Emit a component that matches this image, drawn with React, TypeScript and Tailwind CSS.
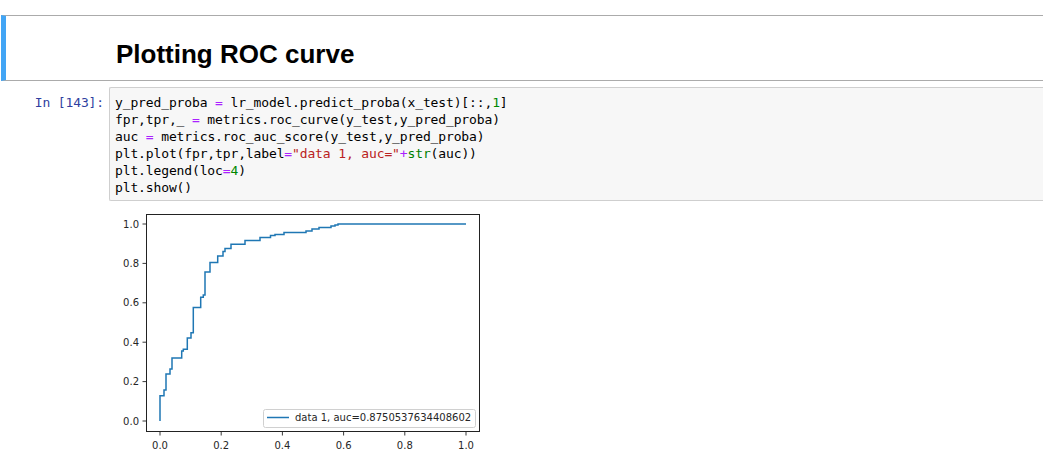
import React from 'react';

const Op = ({ c }: { c: string }) => <span className="text-[#aa22ff]">{c}</span>;
const Num = ({ c }: { c: string }) => <span className="text-[#008800]">{c}</span>;
const Str = ({ c }: { c: string }) => <span className="text-[#ba2121]">{c}</span>;
const Bi = ({ c }: { c: string }) => <span className="text-[#008000]">{c}</span>;

// roc curve traced in page pixels (figure drawn with viewBox at page coords)
const curve = [
  [160, 421], [160, 395.7], [164, 395.7], [164, 390], [166, 390], [166, 374], [170, 374], [170, 369],
  [172, 369], [172, 358], [181.7, 358], [181.7, 351], [183.3, 351], [183.3, 349.3], [187.3, 349.3],
  [187.3, 338], [191, 338], [191, 332.7], [193.3, 332.7], [193.3, 307.5], [200.7, 307.5], [200.7, 297.3],
  [203.3, 297.3], [203.3, 295], [205, 295], [205, 272], [210, 272], [210, 262.5], [217.7, 262.5],
  [217.7, 256], [223, 256], [223, 251.5], [225, 251.5], [225, 248.5], [231, 248.5], [231, 244.3],
  [245, 244.3], [245, 240.5], [260, 240.5], [260, 237.5], [270.5, 237.5], [270.5, 235.5], [275, 235.5],
  [275, 234.5], [284, 234.5], [284, 232.5], [306, 232.5], [306, 231], [312, 231], [312, 229], [319, 229],
  [319, 227.5], [331, 227.5], [331, 226], [335, 226], [335, 225], [338, 225], [338, 224], [466, 224],
];

const yTicks = [
  { v: '1.0', y: 224 }, { v: '0.8', y: 263.4 }, { v: '0.6', y: 302.8 },
  { v: '0.4', y: 342.2 }, { v: '0.2', y: 381.6 }, { v: '0.0', y: 421 },
];
const xTicks = [
  { v: '0.0', x: 160 }, { v: '0.2', x: 221.2 }, { v: '0.4', x: 282.4 },
  { v: '0.6', x: 343.6 }, { v: '0.8', x: 404.8 }, { v: '1.0', x: 466 },
];

function RocPlot() {
  return (
    <svg width={400} height={261} viewBox="100 205 400 261" className="block ml-[100px]">
      <polyline
        points={curve.map(p => p.join(',')).join(' ')}
        fill="none"
        stroke="#1f77b4"
        strokeWidth={1.5}
      />
      <rect x={146.5} y={214.5} width={333} height={217} fill="none" stroke="#222" strokeWidth={1} />
      {yTicks.map(t => (
        <g key={t.v}>
          <line x1={142.5} x2={146} y1={t.y} y2={t.y} stroke="#222" strokeWidth={0.9} />
          <text x={139} y={t.y + 3.6} textAnchor="end" fontSize={10} fontFamily="DejaVu Sans" fill="#262626">{t.v}</text>
        </g>
      ))}
      {xTicks.map(t => (
        <g key={t.v}>
          <line x1={t.x} x2={t.x} y1={432} y2={435.5} stroke="#222" strokeWidth={0.9} />
          <text x={t.x} y={448.5} textAnchor="middle" fontSize={10} fontFamily="DejaVu Sans" fill="#262626">{t.v}</text>
        </g>
      ))}
      {/* legend */}
      <rect x={263.5} y={409.5} width={212} height={18} rx={2} fill="#fff" fillOpacity={0.8} stroke="#d0d0d0" strokeWidth={1} />
      <line x1={267} x2={289} y1={417.5} y2={417.5} stroke="#1f77b4" strokeWidth={1.5} />
      <text x={295} y={421.3} fontSize={10} fontFamily="DejaVu Sans" fill="#262626">data 1, auc=0.8750537634408602</text>
    </svg>
  );
}

export default function App() {
  return (
    <div className="w-[1043px] h-[466px] overflow-hidden bg-white pt-[15px]">
      {/* markdown cell (selected) */}
      <div className="ml-[1px] border-t border-b border-[#ababab] border-l-[5px] border-l-[#42a5f5] pt-[23px] pb-[11px]">
        <h2 className="pl-[110px] text-[26px] leading-[30px] font-bold text-black font-['Liberation_Sans',Arial,sans-serif]">
          Plotting ROC curve
        </h2>
      </div>

      {/* code cell */}
      <div className="flex mt-[6px] font-['DejaVu_Sans_Mono',monospace] text-[13px] tracking-[-0.13px] leading-[17px]">
        <div className="w-[109px] shrink-0 text-right pr-[5px] pt-[7px] text-[#303f9f] whitespace-pre">In [143]:</div>
        <div className="flex-1 bg-[#f7f7f7] border border-[#cfcfcf] border-r-0 rounded-l-[2px] pl-[5px] pt-[6px] pb-[4px] text-black whitespace-pre">
          <div>y_pred_proba <Op c="=" /> lr_model.predict_proba(x_test)[::,<Num c="1" />]</div>
          <div>fpr,tpr,_ <Op c="=" /> metrics.roc_curve(y_test,y_pred_proba)</div>
          <div>auc <Op c="=" /> metrics.roc_auc_score(y_test,y_pred_proba)</div>
          <div>plt.plot(fpr,tpr,label<Op c="=" /><Str c={'"data 1, auc="'} /><Op c="+" /><Bi c="str" />(auc))</div>
          <div>plt.legend(loc<Op c="=" /><Num c="4" />)</div>
          <div>plt.show()</div>
        </div>
      </div>

      {/* output */}
      <div className="mt-[4px]">
        <RocPlot />
      </div>
    </div>
  );
}
